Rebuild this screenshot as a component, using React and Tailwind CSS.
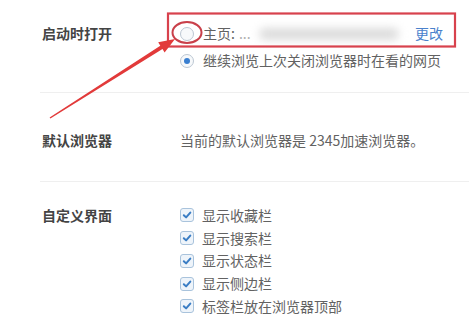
import React from 'react'

const Check = () => (
  <span className="w-[14px] h-[14px] rounded-[3px] border border-[#a9c3dc] bg-[#eef4fa] flex items-center justify-center shrink-0">
    <svg width="10" height="10" viewBox="0 0 10 10">
      <path d="M1.8 5.2 L4.1 7.4 L8.3 2.6" fill="none" stroke="#3a7dc4" strokeWidth="2" strokeLinecap="round" strokeLinejoin="round" />
    </svg>
  </span>
)

const Radio = ({ on }) => (
  <span className="w-[14px] h-[14px] rounded-full border border-[#bcc7d3] bg-[#f7f9fb] flex items-center justify-center shrink-0">
    {on && <span className="w-[6px] h-[6px] rounded-full bg-[#3a7fd0]" />}
  </span>
)

const items = ['显示收藏栏', '显示搜索栏', '显示状态栏', '显示侧边栏', '标签栏放在浏览器顶部']

const App = () => {
  return (
    <div className="relative w-[469px] h-[326px] overflow-hidden bg-white text-[14px] text-[#626262] font-['Noto_Sans_CJK_SC','Noto_Sans',sans-serif]">
      <div className="ml-[40px] flex border-b border-[#efefef] pt-[20px] pb-[18px]">
        <div className="w-[140px] pl-[2px] leading-[27px] font-semibold text-[#444]">启动时打开</div>
        <div className="flex flex-col w-[263px]">
          <div className="flex items-center h-[27px]">
            <Radio />
            <span className="ml-[9px]">主页:</span>
            <span className="ml-[4px] text-[#b0b0b0]">...</span>
            <span className="ml-[8px] w-[140px] h-[12px] rounded-full bg-[#dcdcdc] blur-[4px]" />
            <span className="ml-auto text-[#4a82cc]">更改</span>
          </div>
          <div className="flex items-center h-[27px]">
            <Radio on />
            <span className="ml-[9px]">继续浏览上次关闭浏览器时在看的网页</span>
          </div>
        </div>
      </div>

      <div className="ml-[40px] flex border-b border-[#efefef] pt-[36px] pb-[30px]">
        <div className="w-[140px] pl-[2px] leading-[22px] font-semibold text-[#444]">默认浏览器</div>
        <div className="leading-[22px]">当前的默认浏览器是 2345加速浏览器。</div>
      </div>

      <div className="ml-[40px] flex pt-[22px]">
        <div className="w-[140px] pl-[2px] leading-[23px] font-semibold text-[#444]">自定义界面</div>
        <div className="flex flex-col">
          {items.map((t) => (
            <div key={t} className="flex items-center h-[22.75px]">
              <Check />
              <span className="ml-[8px]">{t}</span>
            </div>
          ))}
        </div>
      </div>

      <svg className="absolute inset-0 pointer-events-none" width="469" height="326" viewBox="0 0 469 326">
        <rect x="168" y="13.5" width="287" height="33" fill="none" stroke="#d8424d" strokeWidth="2.2" />
        <ellipse cx="187" cy="32.5" rx="14.5" ry="10.5" fill="none" stroke="#c9404a" strokeWidth="2" />
        <polygon
          points="50.4,118.5 162.5,49.1 164.6,52.5 175,39 158.2,42.3 160.3,45.7 49.6,117.5"
          fill="#e23a3a"
        />
      </svg>
    </div>
  )
}

export default App
